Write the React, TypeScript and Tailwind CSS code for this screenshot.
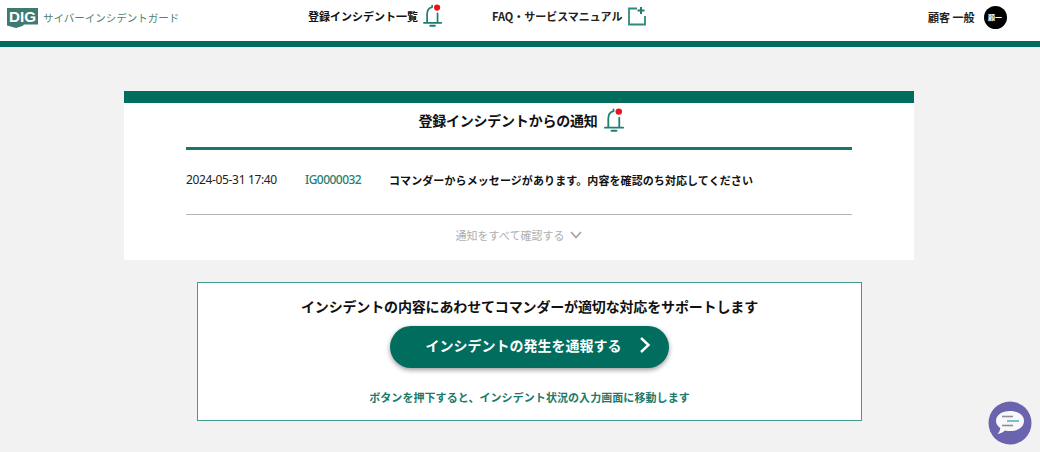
const jp = "font-['Noto_Sans_CJK_JP','Noto_Sans',sans-serif]";

function Bell({ className }: { className?: string }) {
  return (
    <svg viewBox="0 0 22 26" className={className} fill="none">
      <path d="M4.5 20 V11 C4.5 7 6.5 4 10 3.2 M10 3 V1.5 M16 10 V20" stroke="#1f7f70" strokeWidth="1.9" strokeLinecap="round" />
      <path d="M1 20.5 H20" stroke="#1f7f70" strokeWidth="2" strokeLinecap="round" />
      <path d="M8 23.8 H13" stroke="#1f7f70" strokeWidth="2.2" strokeLinecap="round" />
      <circle cx="15.5" cy="3.7" r="3.4" fill="#f0101c" />
    </svg>
  );
}

function PlusNote() {
  return (
    <svg viewBox="0 0 20 20" className="h-[20px] w-[20px]" fill="none">
      <path d="M10 2.5 H2 V18.5 H18 V10" stroke="#2e8a7c" strokeWidth="1.8" />
      <path d="M14 1 V8 M10.5 4.5 H17.5" stroke="#1f7f70" strokeWidth="2" />
    </svg>
  );
}

function Logo() {
  return (
    <div className="flex items-center gap-[5px]">
      <svg viewBox="0 0 31 20" className="h-[20px] w-[31px]">
        <path d="M0 0 H31 V16.5 L17 16.5 L15.5 18 L9 20 L0 17.5 Z" fill="#3f7a70" />
        <text x="15.5" y="14" textAnchor="middle" fontSize="14" fontWeight="700" fill="#ffffff" fontFamily="Liberation Sans, sans-serif" textLength="27" lengthAdjust="spacingAndGlyphs">DIG</text>
      </svg>
      <span className={`relative top-[1px] text-[10.5px] leading-none text-[#4f7f76] ${jp}`}>サイバーインシデントガード</span>
    </div>
  );
}

function Chat() {
  return (
    <svg viewBox="0 0 44 44" className="h-[44px] w-[44px]">
      <circle cx="22" cy="22" r="21.5" fill="#6a64ae" />
      <path d="M22 10 C30 10 36 14 36 20 C36 26 30 30 22 30 C20 30 18.5 29.8 17 29.4 C15 31 12.5 32.5 9.5 33 C11 31.5 12 29.5 12.3 27 C9.5 25 8 22.8 8 20 C8 14 14 10 22 10 Z" fill="#f8f8fb" />
      <path d="M14 15.5 H25" stroke="#8d8d96" strokeWidth="1.6" />
      <path d="M19 20 H31" stroke="#58b4b8" strokeWidth="1.6" />
      <path d="M14 24.5 H25" stroke="#8d8d96" strokeWidth="1.6" />
    </svg>
  );
}

export default function App() {
  return (
    <div className={`relative flex h-[452px] w-[1040px] flex-col overflow-hidden bg-[#f2f2f2] ${jp}`}>
      <header className="flex h-[47px] items-start border-b-[6px] border-[#006d5e] bg-white">
        <div className="flex h-[41px] w-full items-center pb-[10px]">
          <div className="relative top-[2px] ml-[7px] w-[301px]">
            <Logo />
          </div>
          <div className="flex w-[184px] items-center gap-[5px]">
            <span className="relative top-[1px] text-[11px] font-bold text-[#111]">登録インシデント一覧</span>
            <Bell className="h-[24px] w-[20px]" />
          </div>
          <div className="flex w-[436px] items-center gap-[5px]">
            <span className="relative top-[1px] text-[11px] font-bold tracking-[-0.02px] text-[#222]">FAQ・サービスマニュアル</span>
            <PlusNote />
          </div>
          <div className="relative top-[2px] flex items-center gap-[9px]">
            <span className="text-[11px] font-bold text-[#222]">顧客 一般</span>
            <div className="flex h-[23px] w-[23px] items-center justify-center rounded-full bg-black text-[7px] font-bold text-white">
              顧一
            </div>
          </div>
        </div>
      </header>

      <main className="mt-[44px] flex flex-col">
        <section className="ml-[124px] h-[169px] w-[790px] border-t-[12px] border-[#006d5e] bg-white px-[62px]">
          <div className="flex h-[47px] items-center justify-center gap-[7px] border-b-[3px] border-[#14796b] pb-[10px] pl-[6px]">
            <h2 className="text-[14px] font-bold tracking-[-0.24px] text-[#111]">登録インシデントからの通知</h2>
            <Bell className="h-[25px] w-[21px]" />
          </div>
          <div className="flex h-[65px] items-center border-b border-[#b5b5b5] pb-[4px] text-[11px] leading-none">
            <span className="w-[119px] text-[12px] tracking-[-0.35px] text-[#222] font-['Noto_Sans',sans-serif]">2024-05-31 17:40</span>
            <span className="w-[84px] text-[12px] font-medium tracking-[-0.55px] text-[#1f8070] font-['Noto_Sans',sans-serif]">IG0000032</span>
            <span className="font-bold tracking-[0.09px] text-[#111]">コマンダーからメッセージがあります。内容を確認のち対応してください</span>
          </div>
          <div className="flex h-[45px] items-center justify-center gap-[6px] pb-[5px] text-[11px] text-[#aeaeae]">
            <span>通知をすべて確認する</span>
            <svg viewBox="0 0 12 8" className="h-[8px] w-[12px]" fill="none">
              <path d="M1 1 L6 6.5 L11 1" stroke="#a5a5a5" strokeWidth="1.8" />
            </svg>
          </div>
        </section>

        <section className="mt-[22px] ml-[197px] flex h-[139px] w-[665px] flex-col items-center border border-[#3f9c8e] bg-white">
          <p className="mt-[13px] text-[14px] leading-[20px] font-bold tracking-[-0.15px] text-[#111]">
            インシデントの内容にあわせてコマンダーが適切な対応をサポートします
          </p>
          <button className="relative mt-[10px] flex h-[42px] w-[279px] items-center justify-center rounded-full bg-[#006d5e] pr-[12px] pb-[3px] text-[14px] font-bold text-white shadow-[0_2px_5px_rgba(0,0,0,0.4)]">
            インシデントの発生を通報する
            <svg viewBox="0 0 12 18" className="absolute top-[10px] right-[18px] h-[18px] w-[12px]" fill="none">
              <path d="M2 2 L9.5 9 L2 16" stroke="#fff" strokeWidth="2.4" />
            </svg>
          </button>
          <p className="mt-[21px] text-[11px] leading-[16px] font-bold tracking-[0.07px] text-[#1a7a6c]">
            ボタンを押下すると、インシデント状況の入力画面に移動します
          </p>
        </section>
      </main>

      <div className="absolute top-[401px] left-[988px]">
        <Chat />
      </div>
    </div>
  );
}
